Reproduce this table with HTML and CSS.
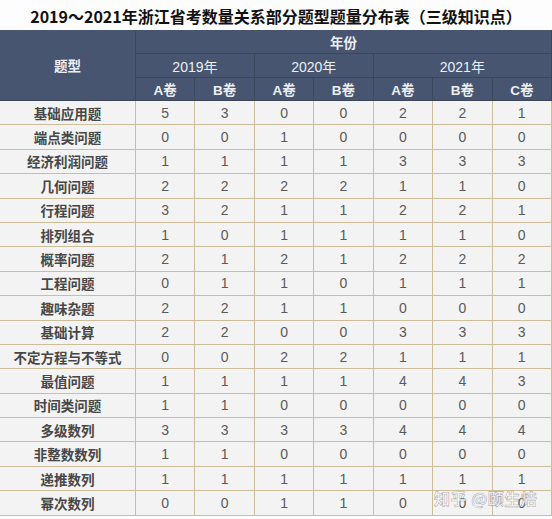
FILE: index.html
```html
<!DOCTYPE html>
<html lang="zh-CN">
<head>
    <meta charset="UTF-8">
    <meta name="viewport" content="width=device-width, initial-scale=1.0">
    <title>题量分布表</title>
    <link rel="stylesheet" href="styles.css">
</head>
<body>
    <div class="page">
        <h1 class="title">2019～2021年浙江省考数量关系部分题型题量分布表（三级知识点）</h1>
        <table class="dist">
            <thead>
                <tr class="h1">
                    <th rowspan="3" class="type-head">题型</th>
                    <th colspan="7">年份</th>
                </tr>
                <tr class="h2">
                    <th colspan="2" class="year">2019年</th>
                    <th colspan="2" class="year">2020年</th>
                    <th colspan="3" class="year">2021年</th>
                </tr>
                <tr class="h3">
                    <th>A卷</th><th>B卷</th>
                    <th>A卷</th><th>B卷</th>
                    <th>A卷</th><th>B卷</th><th>C卷</th>
                </tr>
            </thead>
            <tbody>
                <tr><td class="name">基础应用题</td><td>5</td><td>3</td><td>0</td><td>0</td><td>2</td><td>2</td><td>1</td></tr>
                <tr><td class="name">端点类问题</td><td>0</td><td>0</td><td>1</td><td>0</td><td>0</td><td>0</td><td>0</td></tr>
                <tr><td class="name">经济利润问题</td><td>1</td><td>1</td><td>1</td><td>1</td><td>3</td><td>3</td><td>3</td></tr>
                <tr><td class="name">几何问题</td><td>2</td><td>2</td><td>2</td><td>2</td><td>1</td><td>1</td><td>0</td></tr>
                <tr><td class="name">行程问题</td><td>3</td><td>2</td><td>1</td><td>1</td><td>2</td><td>2</td><td>1</td></tr>
                <tr><td class="name">排列组合</td><td>1</td><td>0</td><td>1</td><td>1</td><td>1</td><td>1</td><td>0</td></tr>
                <tr><td class="name">概率问题</td><td>2</td><td>1</td><td>2</td><td>1</td><td>2</td><td>2</td><td>2</td></tr>
                <tr><td class="name">工程问题</td><td>0</td><td>1</td><td>1</td><td>0</td><td>1</td><td>1</td><td>1</td></tr>
                <tr><td class="name">趣味杂题</td><td>2</td><td>2</td><td>1</td><td>1</td><td>0</td><td>0</td><td>0</td></tr>
                <tr><td class="name">基础计算</td><td>2</td><td>2</td><td>0</td><td>0</td><td>3</td><td>3</td><td>3</td></tr>
                <tr><td class="name">不定方程与不等式</td><td>0</td><td>0</td><td>2</td><td>2</td><td>1</td><td>1</td><td>1</td></tr>
                <tr><td class="name">最值问题</td><td>1</td><td>1</td><td>1</td><td>1</td><td>4</td><td>4</td><td>3</td></tr>
                <tr><td class="name">时间类问题</td><td>1</td><td>1</td><td>0</td><td>0</td><td>0</td><td>0</td><td>0</td></tr>
                <tr><td class="name">多级数列</td><td>3</td><td>3</td><td>3</td><td>3</td><td>4</td><td>4</td><td>4</td></tr>
                <tr><td class="name">非整数数列</td><td>1</td><td>1</td><td>0</td><td>0</td><td>0</td><td>0</td><td>0</td></tr>
                <tr><td class="name">递推数列</td><td>1</td><td>1</td><td>1</td><td>1</td><td>1</td><td>1</td><td>1</td></tr>
                <tr><td class="name">幂次数列</td><td>0</td><td>0</td><td>1</td><td>1</td><td>0</td><td>0</td><td>0</td></tr>
            </tbody>
        </table>
        <div class="watermark">知乎 @颐生焙</div>
    </div>
</body>
</html>
```

FILE: styles.css
```css
body {
    margin: 0;
    background: #fdfdfd;
    font-family: 'Liberation Sans', 'Noto Sans CJK SC', sans-serif;
}

.page {
    position: relative;
    width: 552px;
    height: 519px;
    overflow: hidden;
}

.title {
    margin: 0;
    height: 30px;
    line-height: 32px;
    text-align: center;
    font-family: 'Noto Sans CJK SC', sans-serif;
    font-size: 16px;
    font-weight: 700;
    color: #111;
    letter-spacing: 0;
}

.dist {
    width: 552px;
    border-collapse: collapse;
    table-layout: fixed;
}

.dist th {
    background: #475570;
    color: #eceef2;
    font-family: 'Liberation Sans', 'Noto Sans CJK SC', sans-serif;
    font-size: 13.5px;
    font-weight: 700;
    border: 1px solid #3c4659;
    padding: 0;
    text-align: center;
}

.dist .type-head {
    width: 135px;
    border-left: none;
}

.dist .h1 th {
    height: 23px;
    border-top: none;
}

.dist .h2 th {
    height: 23px;
}

.dist .h2 .year {
    font-weight: 400;
    font-size: 14px;
}

.dist .h3 th {
    height: 22px;
}

.dist td {
    background: #f3f3f3;
    border: 1px solid #cdbd9a;
    height: 23.4px;
    padding: 0;
    text-align: center;
    font-size: 14px;
    color: #5a5a5a;
}

.dist td:first-child {
    border-left: none;
}

.dist td.name {
    font-family: 'Noto Sans CJK SC', sans-serif;
    font-weight: 700;
    font-size: 13.5px;
    color: #474747;
}

.watermark {
    position: absolute;
    left: 434px;
    top: 486px;
    font-family: 'Noto Sans CJK SC', sans-serif;
    font-size: 16px;
    font-weight: 700;
    color: rgba(255, 255, 255, 0.75);
    -webkit-text-stroke: 0.6px rgba(120, 120, 120, 0.6);
    letter-spacing: 0.5px;
}
```
